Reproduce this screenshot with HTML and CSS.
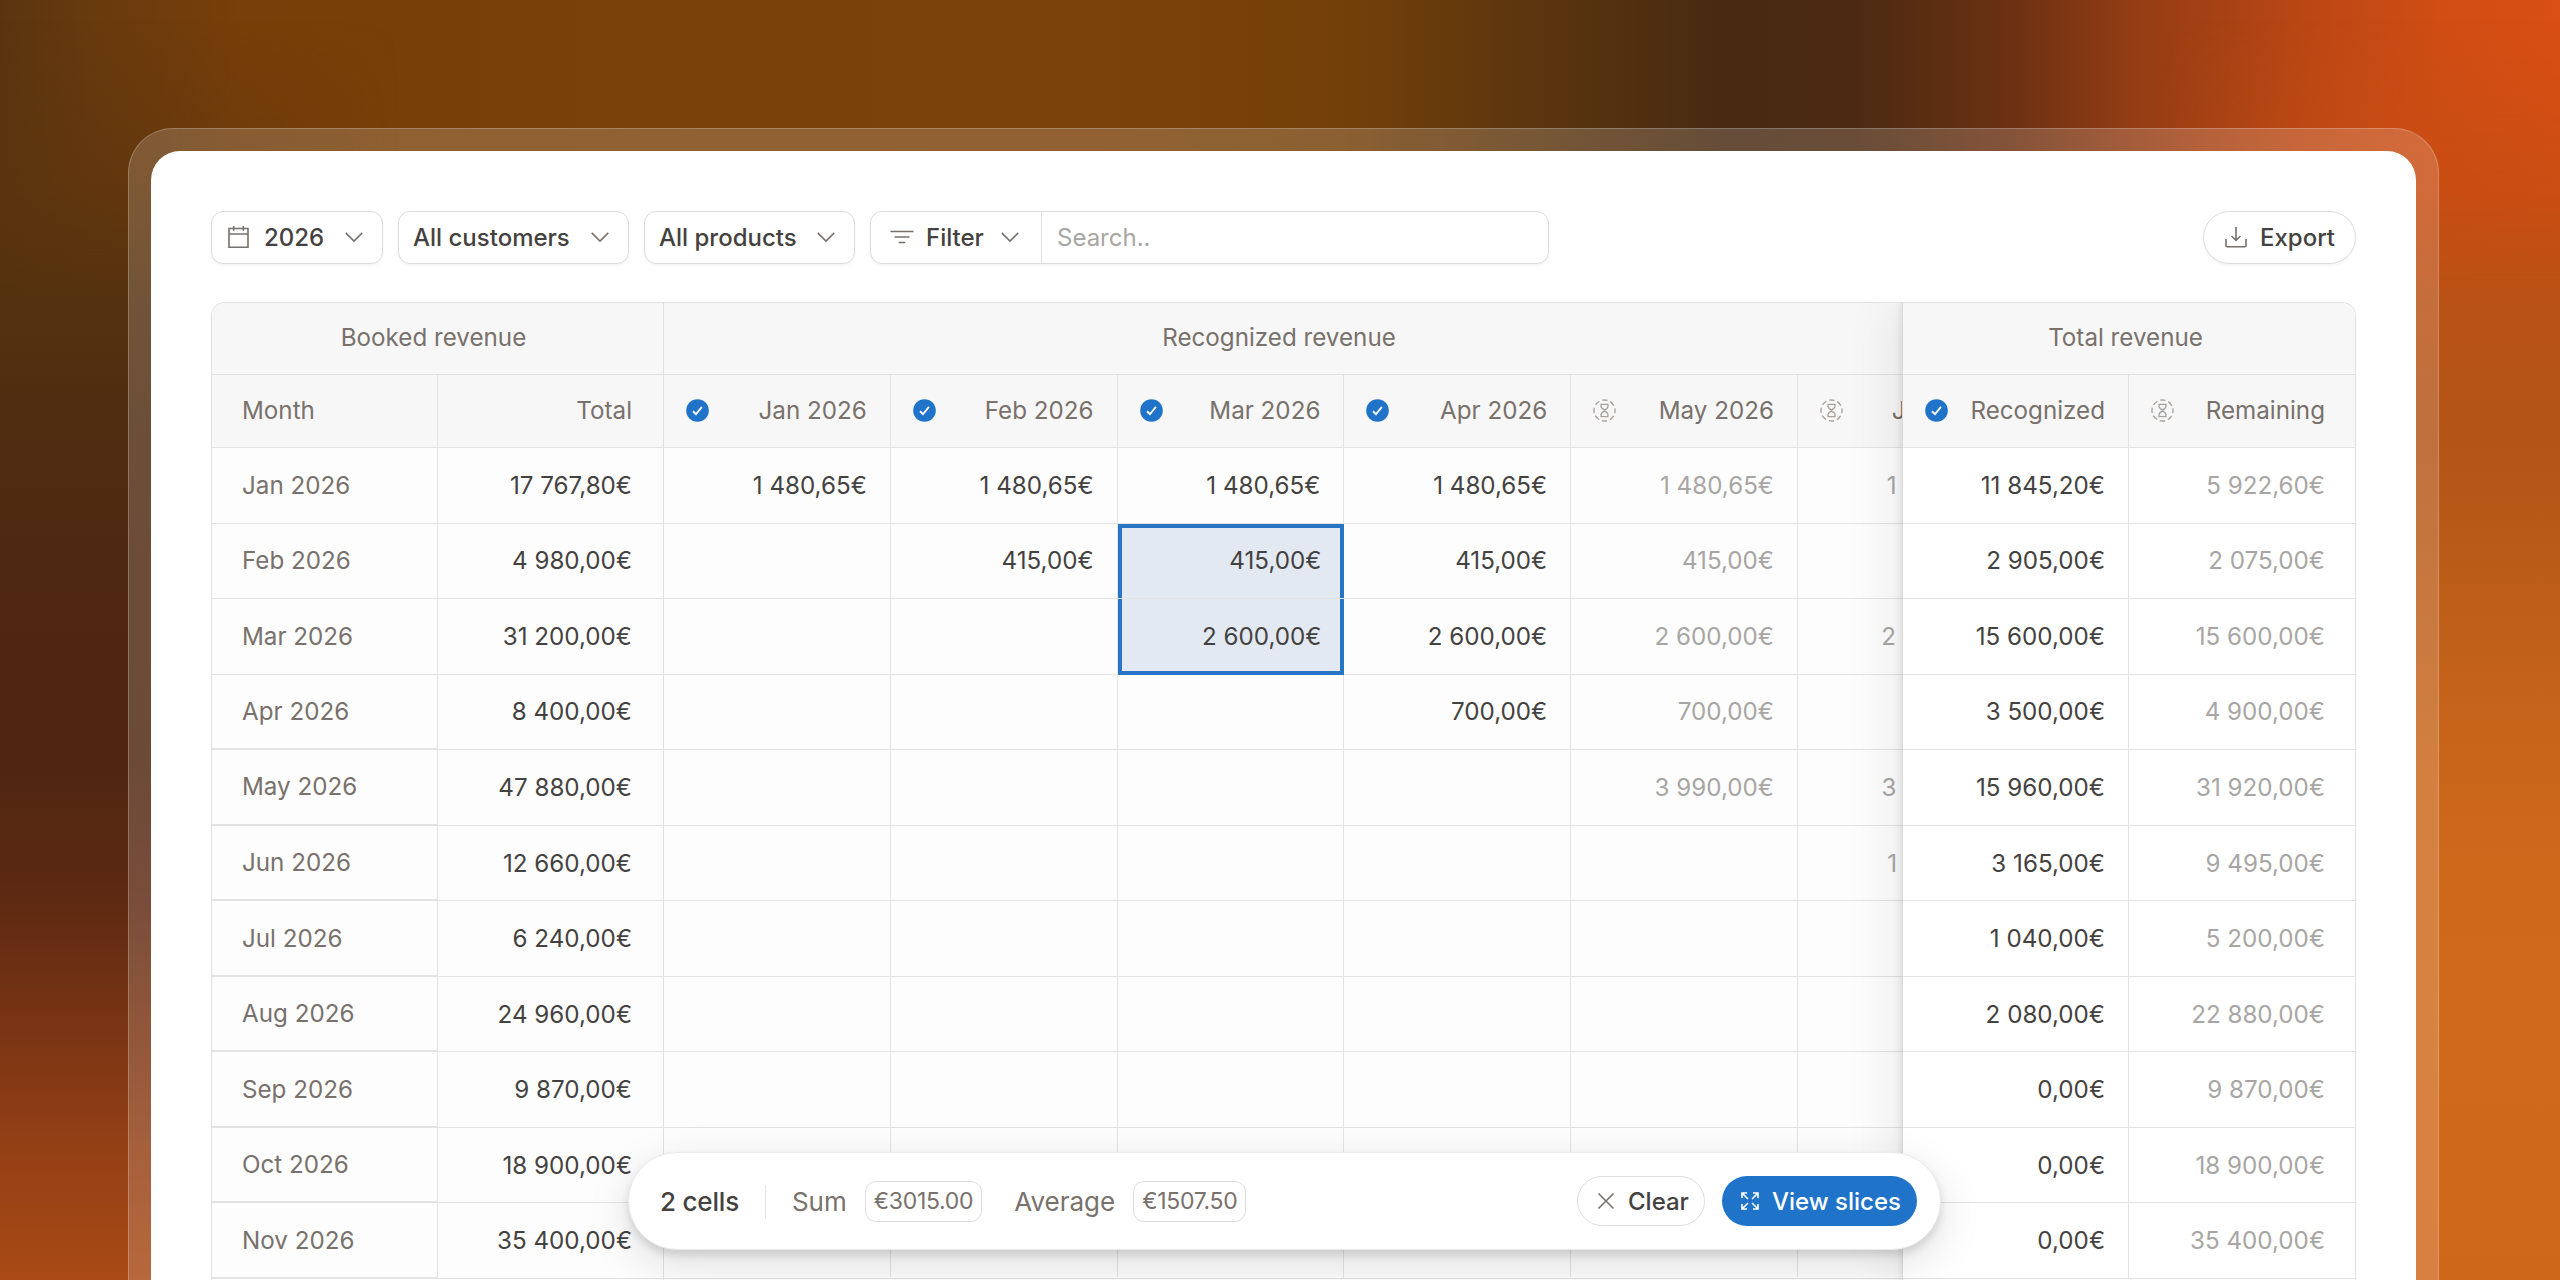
FILE: index.html
```html
<!DOCTYPE html>
<html lang="en">
<head>
    <meta charset="UTF-8">
    <meta name="viewport" content="width=device-width, initial-scale=1.0">
    <title>Revenue recognition</title>
    <link rel="stylesheet" href="styles.css">
</head>
<body>
    <svg class="sprite" width="0" height="0">
        <symbol id="chevron" viewBox="0 0 24 24"><path d="M3 7.5l9 9 9-9"/></symbol>
        <symbol id="check" viewBox="0 0 24 24"><circle class="disc" cx="12" cy="12" r="11.8"/><path class="tick" d="M7.3 12.8l3.1 3.1 6.2-7.7"/></symbol>
        <symbol id="pending" viewBox="0 0 24 24">
            <circle cx="12" cy="12" r="11" stroke-dasharray="5.64 3" stroke-dashoffset="2.8"/>
            <path d="M7.8 5.6h8.4M7.8 18.4h8.4M8.4 5.6v2.4c0 1.8 3.6 3 3.6 4s-3.6 2.2-3.6 4v2.4M15.6 5.6v2.4c0 1.8-3.6 3-3.6 4s3.6 2.2 3.6 4v2.4"/>
        </symbol>
    </svg>

    <div class="frame">
        <main class="card">
            <div class="toolbar">
                <button class="btn btn-year" type="button">
                    <svg class="icon-calendar" viewBox="0 0 21 24"><path d="M1 3.5h19v18.8H1zM1 9h19M5.7 1v4.7M15.3 1v4.7"/></svg>
                    2026
                    <svg class="chevron"><use href="#chevron"/></svg>
                </button>
                <button class="btn btn-customers" type="button">All customers <svg class="chevron"><use href="#chevron"/></svg></button>
                <button class="btn btn-products" type="button">All products <svg class="chevron"><use href="#chevron"/></svg></button>
                <div class="search">
                    <button class="filter" type="button">
                        <svg class="icon-filter" viewBox="0 0 24 16"><path d="M.5 2.5h23M4.5 8h15M8.7 13.5h6.6"/></svg>
                        Filter
                        <svg class="chevron"><use href="#chevron"/></svg>
                    </button>
                    <input type="text" placeholder="Search..">
                </div>
                <button class="btn btn-export" type="button">
                    <svg class="icon-export" viewBox="0 0 22 22"><path d="M11 1v13M6.5 10l4.5 4.3 4.5-4.3M1 13v6.5q0 1.2 1.2 1.2h17.6q1.2 0 1.2-1.2V13"/></svg>
                    Export
                </button>
            </div>

            <div class="table">
                <section class="pane booked">
                    <div class="group">Booked revenue</div>
                    <div class="grid" id="booked"></div>
                </section>
                <section class="pane recognized">
                    <div class="group">Recognized revenue</div>
                    <div class="grid" id="recognized"></div>
                </section>
                <section class="pane total">
                    <div class="group">Total revenue</div>
                    <div class="grid" id="total"></div>
                </section>
            </div>
        </main>
    </div>

    <div class="selection-bar">
        <strong class="count">2 cells</strong>
        <span class="divider"></span>
        <span class="stat">Sum <span class="pill">€3015.00</span></span>
        <span class="stat">Average <span class="pill">€1507.50</span></span>
        <button class="action clear" type="button">
            <svg viewBox="0 0 18 18"><path d="M1.5 1.5l15 15M16.5 1.5l-15 15"/></svg>
            Clear
        </button>
        <button class="action view" type="button">
            <svg viewBox="0 0 18 18"><path d="M1 6V1h5M1 1l6 6M12 1h5v5M17 1l-6 6M1 12v5h5M1 17l6-6M12 17h5v-5M17 17l-6-6"/></svg>
            View slices
        </button>
    </div>

    <script>
        // month, booked total, recognized Jan..Jun, recognized, remaining
        const rows = [
            ["Jan 2026", "17 767,80", "1 480,65", "1 480,65", "1 480,65", "1 480,65", "1 480,65", "1 480,65", "11 845,20", "5 922,60"],
            ["Feb 2026", "4 980,00", "", "415,00", "415,00", "415,00", "415,00", "", "2 905,00", "2 075,00"],
            ["Mar 2026", "31 200,00", "", "", "2 600,00", "2 600,00", "2 600,00", "2 600,00", "15 600,00", "15 600,00"],
            ["Apr 2026", "8 400,00", "", "", "", "700,00", "700,00", "", "3 500,00", "4 900,00"],
            ["May 2026", "47 880,00", "", "", "", "", "3 990,00", "3 990,00", "15 960,00", "31 920,00"],
            ["Jun 2026", "12 660,00", "", "", "", "", "", "1 055,00", "3 165,00", "9 495,00"],
            ["Jul 2026", "6 240,00", "", "", "", "", "", "", "1 040,00", "5 200,00"],
            ["Aug 2026", "24 960,00", "", "", "", "", "", "", "2 080,00", "22 880,00"],
            ["Sep 2026", "9 870,00", "", "", "", "", "", "", "0,00", "9 870,00"],
            ["Oct 2026", "18 900,00", "", "", "", "", "", "", "0,00", "18 900,00"],
            ["Nov 2026", "35 400,00", "", "", "", "", "", "", "0,00", "35 400,00"]
        ];
        const months = ["Jan 2026", "Feb 2026", "Mar 2026", "Apr 2026", "May 2026", "Jun 2026"];

        const head = (text, icon) => `<div class="cell head">${icon ? `<svg class="status ${icon}"><use href="#${icon}"/></svg>` : ""}${text}</div>`;
        const cell = (value, cls = "") => `<div class="cell ${cls}">${value ? value + "€" : ""}</div>`;

        let booked = head("Month") + head("Total");
        let recognized = months.map((m, i) => head(m, i < 4 ? "check" : "pending")).join("");
        let total = head("Recognized", "check") + head("Remaining", "pending");

        rows.forEach((row, r) => {
            booked += `<div class="cell month">${row[0]}</div>` + cell(row[1]);
            row.slice(2, 8).forEach((value, c) => {
                let cls = c > 3 ? "muted" : "";
                if (c === 2 && r === 1) cls = "selected first";
                if (c === 2 && r === 2) cls = "selected last";
                recognized += cell(value, cls);
            });
            total += cell(row[8]) + cell(row[9], "muted");
        });

        document.getElementById("booked").innerHTML = booked;
        document.getElementById("recognized").innerHTML = recognized;
        document.getElementById("total").innerHTML = total;
    </script>
</body>
</html>
```
FILE: styles.css
```css
* {
    box-sizing: border-box;
}
body {
    margin: 0;
    height: 1280px;
    overflow: hidden;
    position: relative;
    padding: 128px 121px 0 128px;
    font-family: Inter, sans-serif;
    font-size: 24px;
    color: #444240;
    background: linear-gradient(to right, #59350f 0, #683a0e 90px, #773f09 240px, #7a4109 700px, #7b420a 1100px, #744009 1340px, #5b350e 1540px, #482a11 1720px, #4c2a11 1860px, #6b3112 2010px, #953d14 2140px, #bd4814 2320px, #d04d14 2440px, #d94f14 2560px);
}

/* warm glow down both sides, faded out towards the middle */
body::before,
body::after {
    content: "";
    position: absolute;
    top: 0;
    width: 400px;
    height: 1280px;
}
body::before {
    left: 0;
    background: linear-gradient(to bottom, rgba(92, 52, 14, 0) 20px, rgba(92, 52, 14, 0.5) 180px, #55320f 300px, #4f2c10 420px, #4f2811 560px, #4f2610 760px, #5c2912 890px, #743213 1000px, #923f15 1140px, #a94a15 1280px);
    -webkit-mask: linear-gradient(to right, #000 160px, transparent);
    mask: linear-gradient(to right, #000 160px, transparent);
}
body::after {
    right: 0;
    background: linear-gradient(to bottom, rgba(197, 77, 19, 0) 20px, rgba(197, 77, 19, 0.7) 190px, #b95114 300px, #b35316 420px, #b95a18 540px, #c5631a 700px, #ce681b 860px, #d1691c 1040px, #cf671b 1280px);
    -webkit-mask: linear-gradient(to left, #000 150px, transparent);
    mask: linear-gradient(to left, #000 150px, transparent);
}
button,
input {
    font: inherit;
    color: inherit;
    background: none;
    border: none;
    padding: 0;
    margin: 0;
}
svg {
    fill: none;
    stroke: #78716c;
    stroke-width: 1.6;
    flex: none;
}
.sprite {
    position: absolute;
}
.frame {
    position: relative;
    z-index: 1;
    height: 1152px;
    padding: 22px 22px 0;
    border: 1px solid rgba(255, 255, 255, 0.22);
    border-bottom: 0;
    border-radius: 45px 45px 0 0;
    background: rgba(255, 255, 255, 0.17);
}
.card {
    height: 1129px;
    padding: 60px 60px 0;
    border-radius: 29px 29px 0 0;
    background: #fff;
}

/* toolbar */
.toolbar {
    display: flex;
    gap: 15px;
    height: 53px;
    margin-bottom: 38px;
}
.btn,
.search {
    display: flex;
    align-items: center;
    height: 53px;
    border: 1px solid #dddcda;
    border-radius: 12px;
    background: #fff;
    box-shadow: 0 2px 3px rgba(0, 0, 0, 0.04);
}
.btn,
.filter {
    padding-bottom: 1px;
    font-weight: 500;
    white-space: nowrap;
}
.btn-year {
    width: 172px;
    padding-left: 16px;
}
.btn-customers {
    width: 231px;
    padding-left: 14px;
}
.btn-products {
    width: 211px;
    padding-left: 14px;
}
.chevron {
    width: 22px;
    height: 22px;
    margin-left: auto;
    margin-right: 17px;
}
.icon-calendar {
    width: 21px;
    height: 24px;
    margin-right: 15px;
}
.search {
    width: 679px;
}
.filter {
    display: flex;
    align-items: center;
    width: 171px;
    height: 51px;
    padding-left: 19px;
    border-right: 1px solid #e3e2e0;
}
.filter .chevron {
    margin-right: 20px;
}
.icon-filter {
    width: 24px;
    height: 16px;
    margin-right: 12px;
}
.search input {
    flex: 1;
    padding-left: 15px;
    outline: none;
}
.search input::placeholder {
    color: #a8a6a4;
    opacity: 1;
}
.btn-export {
    width: 153px;
    margin-left: auto;
    padding-left: 21px;
    border-radius: 27px;
}
.icon-export {
    width: 22px;
    height: 24px;
    margin-right: 13px;
}

/* table */
.table {
    display: flex;
    height: 978px;
    border: 1px solid #e2e1df;
    border-bottom: 0;
    border-radius: 14px 14px 0 0;
    overflow: hidden;
    font-size: 24.2px;
}
.pane {
    flex: none;
    overflow: hidden;
}
.booked {
    width: 452px;
    border-right: 1px solid #e2e1df;
}
.recognized {
    width: 1238px;
}
.total {
    width: 454px;
    position: relative;
    border-left: 1px solid #dad9d7;
    background: #fff;
    box-shadow: -2px 0 6px rgba(0, 0, 0, 0.08), -8px 0 48px rgba(0, 0, 0, 0.08);
}
.group {
    height: 72px;
    padding-right: 8px;
    line-height: 70px;
    text-align: center;
    color: #78716c;
    background: #f7f7f7;
    border-bottom: 1px solid #e2e1df;
}
.grid {
    display: grid;
    grid-template-columns: 226px 1fr;
    grid-template-rows: 73px;
    grid-auto-rows: 75.55px;
}
.recognized .grid {
    grid-template-columns: repeat(6, 226.8px);
}
.cell {
    display: flex;
    align-items: center;
    justify-content: flex-end;
    padding: 0 23px 0 22px;
    border-right: 1px solid #e4e3e1;
    border-bottom: 1px solid #e4e3e1;
    background: #fdfdfd;
    white-space: nowrap;
}
.total .cell {
    background: #fff;
}
.cell.head,
.total .cell.head {
    padding-bottom: 1px;
    color: #78716c;
    background: #f7f7f7;
}
.booked .cell,
.total .cell:nth-child(even) {
    padding-right: 31px;
}
.booked .cell:nth-child(even),
.total .cell:nth-child(even) {
    border-right: none;
}
.booked .cell:first-child,
.cell.month {
    justify-content: flex-start;
    padding-left: 30px;
    color: #78716c;
}
.cell.month:nth-child(n + 9) {
    border-bottom-width: 2px;
}
.cell.muted {
    color: #a8a6a4;
}
.status {
    width: 23px;
    height: 23px;
    margin-right: auto;
}
.status.pending {
    stroke: #a8a29e;
    stroke-width: 1.4;
}
.disc {
    fill: #1f74c9;
    stroke: none;
}
.tick {
    stroke: #fff;
    stroke-width: 1.9;
}
.cell.selected {
    background: #e3e9f2;
    border-right: 0;
    box-shadow: inset 4px 0 #2775c4, inset -4px 0 #2775c4;
}
.cell.selected.first {
    box-shadow: inset 4px 0 #2775c4, inset -4px 0 #2775c4, inset 0 4px #2775c4;
}
.cell.selected.last {
    border-bottom: 0;
    box-shadow: inset 4px 0 #2775c4, inset -4px 0 #2775c4, inset 0 -4px #2775c4;
}

/* floating summary of the selected cells */
.selection-bar {
    position: absolute;
    z-index: 2;
    left: 628px;
    top: 1152px;
    width: 1313px;
    height: 98px;
    padding: 0 23px 0 31px;
    display: flex;
    align-items: center;
    border-radius: 49px;
    border: 1px solid #ebeae9;
    background: #fff;
    box-shadow: 0 5px 8px rgba(0, 0, 0, 0.12), 0 14px 45px rgba(0, 0, 0, 0.12);
}
.count {
    font-size: 26px;
    font-weight: 500;
    letter-spacing: -0.2px;
}
.divider {
    width: 1px;
    height: 33px;
    margin: 0 26px;
    background: #e7e5e4;
}
.stat {
    display: flex;
    align-items: center;
    margin-right: 32px;
    color: #78716c;
    font-size: 26px;
}
.pill {
    height: 41px;
    margin-left: 18px;
    padding: 0 8px;
    line-height: 38px;
    font-size: 23px;
    letter-spacing: -0.3px;
    border: 1.5px solid #dfdedc;
    border-radius: 11px;
}
.action {
    display: flex;
    align-items: center;
    height: 50px;
    border-radius: 25px;
    font-weight: 500;
    white-space: nowrap;
}
.action svg {
    width: 18px;
    height: 18px;
    margin-right: 13px;
}
.clear {
    width: 128px;
    margin-left: auto;
    margin-right: 17px;
    padding-left: 19px;
    border: 1px solid #dfdedc;
}
.view {
    width: 195px;
    padding-left: 19px;
    color: #fff;
    background: #1f74c9;
}
.view svg {
    stroke: #fff;
}
```
